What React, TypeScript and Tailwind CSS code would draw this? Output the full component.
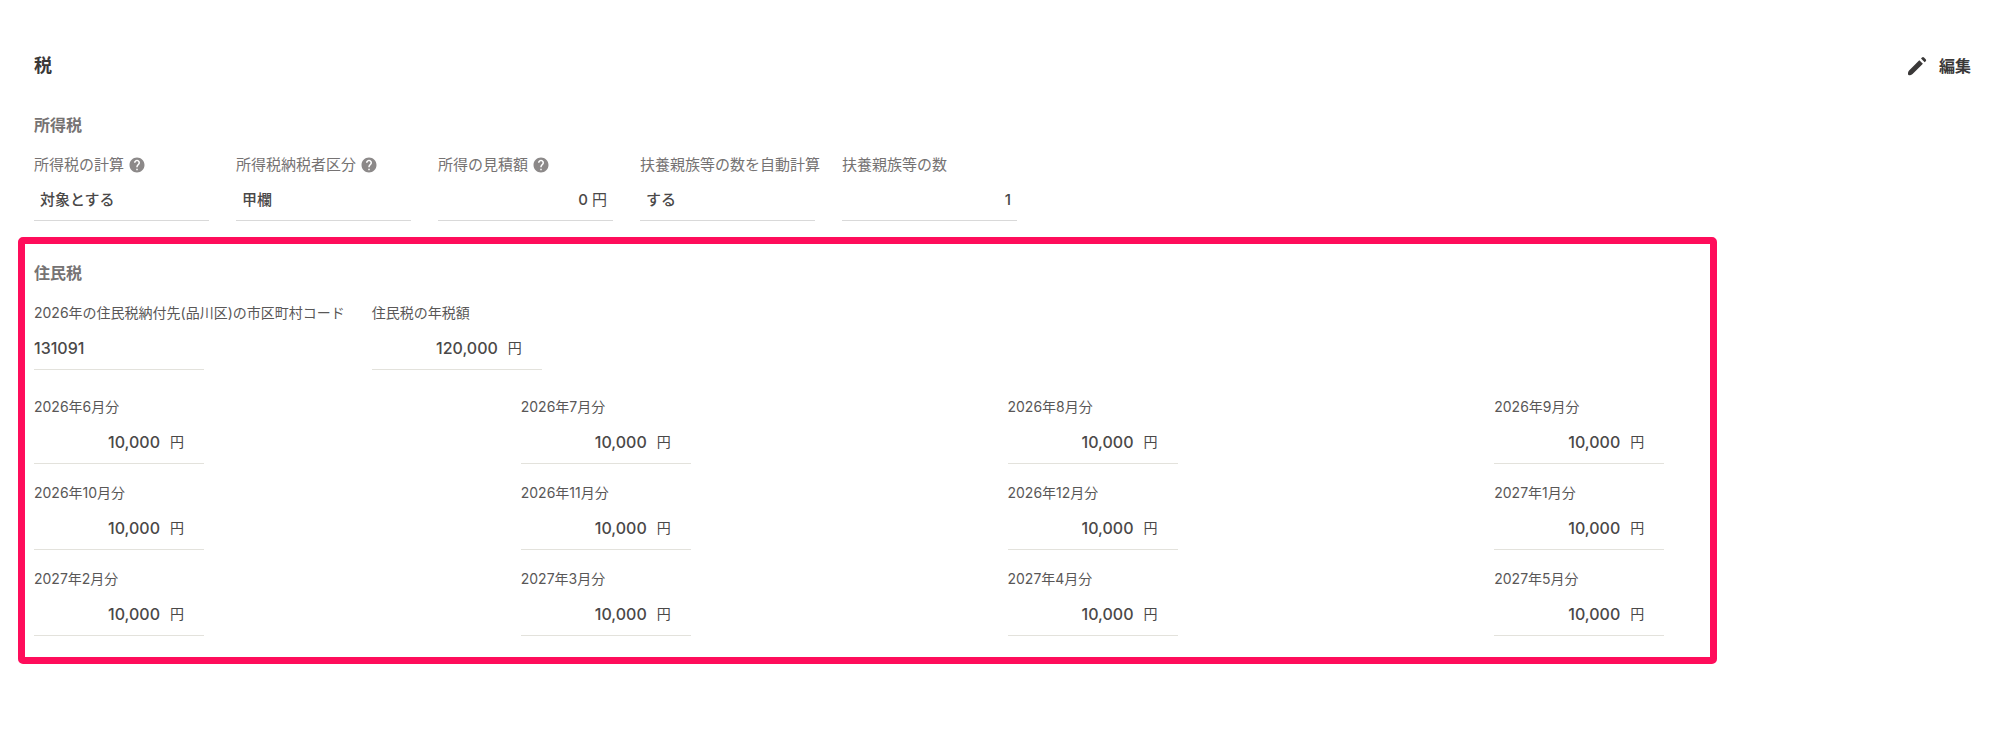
import React from 'react';
import { MdHelp } from 'react-icons/md';

type IncomeField = {
  id: string;
  label: string;
  value: string;
  unit?: string;
  help?: boolean;
  numeric?: boolean;
};

const incomeTaxFields: IncomeField[] = [
  { id: 'calc', label: '所得税の計算', value: '対象とする', help: true },
  { id: 'payer-type', label: '所得税納税者区分', value: '甲欄', help: true },
  { id: 'estimate', label: '所得の見積額', value: '0', unit: '円', help: true, numeric: true },
  { id: 'auto-dependents', label: '扶養親族等の数を自動計算', value: 'する' },
  { id: 'dependents', label: '扶養親族等の数', value: '1', numeric: true },
];

const months = [
  '2026年6月分',
  '2026年7月分',
  '2026年8月分',
  '2026年9月分',
  '2026年10月分',
  '2026年11月分',
  '2026年12月分',
  '2027年1月分',
  '2027年2月分',
  '2027年3月分',
  '2027年4月分',
  '2027年5月分',
];

const PencilIcon: React.FC = () => (
  <svg width="20" height="20" viewBox="0 0 20 20" fill="currentColor" aria-hidden="true">
    <path d="M12.300 4.200 15.900 7.800 5.600 18.100q-1.100 1.100-2.500 1.100H2.200q-1.200 0-1.200-1.200v-1q0-1.400 1.100-2.500z" />
    <path d="m14 2.500 1-1q1-1 2 0l1.700 1.700q1 1 0 2l-1 1z" />
  </svg>
);

const IncomeTaxField: React.FC<{ field: IncomeField }> = ({ field }) => (
  <div className="w-[175px]">
    <div className="flex h-5 items-center gap-1 whitespace-nowrap text-[#767373]">
      <label htmlFor={field.id}>{field.label}</label>
      {field.help && (
        <button type="button" aria-label={`${field.label}のヘルプ`} className="text-[#8c8989]">
          <MdHelp size={18} />
        </button>
      )}
    </div>
    <div className="mt-1 flex h-[42px] items-center gap-1 border-b border-[#d9d9d9] px-1.5">
      <input
        id={field.id}
        readOnly
        defaultValue={field.value}
        className={
          field.numeric
            ? 'w-full min-w-0 text-right font-medium outline-none'
            : 'w-full min-w-0 font-medium outline-none'
        }
      />
      {field.unit && <span>{field.unit}</span>}
    </div>
  </div>
);

const ResidentTaxField: React.FC<{ id: string; label: string; value: string; unit?: string }> = ({
  id,
  label,
  value,
  unit,
}) => (
  <div>
    <label htmlFor={id} className="block h-5 text-sm whitespace-nowrap text-[#595757]">
      {label}
    </label>
    <div
      className={
        unit
          ? 'mt-1 flex h-[43px] w-[170px] items-center gap-2.5 border-b border-[#e3e2dc] pr-5'
          : 'mt-1 flex h-[43px] w-[170px] items-center border-b border-[#e3e2dc]'
      }
    >
      <input
        id={id}
        readOnly
        defaultValue={value}
        className={
          unit
            ? 'w-full min-w-0 text-right text-base font-medium outline-none'
            : 'w-full min-w-0 text-base font-medium outline-none'
        }
      />
      {unit && <span className="shrink-0 text-sm">{unit}</span>}
    </div>
  </div>
);

const App: React.FC = () => {
  return (
    <main className="bg-white px-[34px] pt-[54px] pb-24 font-['Inter','Noto_Sans_CJK_JP',sans-serif] text-[15px] leading-5 text-[#4a4848]">
      <header className="flex items-center justify-between text-[#3a3838]">
        <h1 className="text-lg leading-6 font-bold">税</h1>
        <button type="button" className="-mr-1.5 flex items-center gap-3 text-base leading-6 font-bold">
          <PencilIcon />
          編集
        </button>
      </header>

      <section className="mt-[35px]">
        <h2 className="text-base leading-6 font-bold text-[#767373]">所得税</h2>
        <div className="mt-[18px] flex flex-wrap gap-x-[27px] gap-y-5">
          {incomeTaxFields.map((field) => (
            <IncomeTaxField key={field.id} field={field} />
          ))}
        </div>
      </section>

      <section className="relative mt-10">
        {/* Highlight frame drawn around the resident tax block */}
        <div className="pointer-events-none absolute -top-6 -bottom-7 -left-4 w-[88%] rounded-[5px] border-[7px] border-[#ff0d5b]" />

        <h2 className="text-base leading-6 font-bold text-[#767373]">住民税</h2>
        <div className="mt-[18px] flex flex-wrap gap-x-[27px] gap-y-5">
          <ResidentTaxField id="city-code" label="2026年の住民税納付先(品川区)の市区町村コード" value="131091" />
          <ResidentTaxField id="annual" label="住民税の年税額" value="120,000" unit="円" />
        </div>
        <div className="mt-[27px] grid grid-cols-4 gap-x-4 gap-y-[19px]">
          {months.map((month) => (
            <ResidentTaxField key={month} id={month} label={month} value="10,000" unit="円" />
          ))}
        </div>
      </section>
    </main>
  );
};

export default App;
